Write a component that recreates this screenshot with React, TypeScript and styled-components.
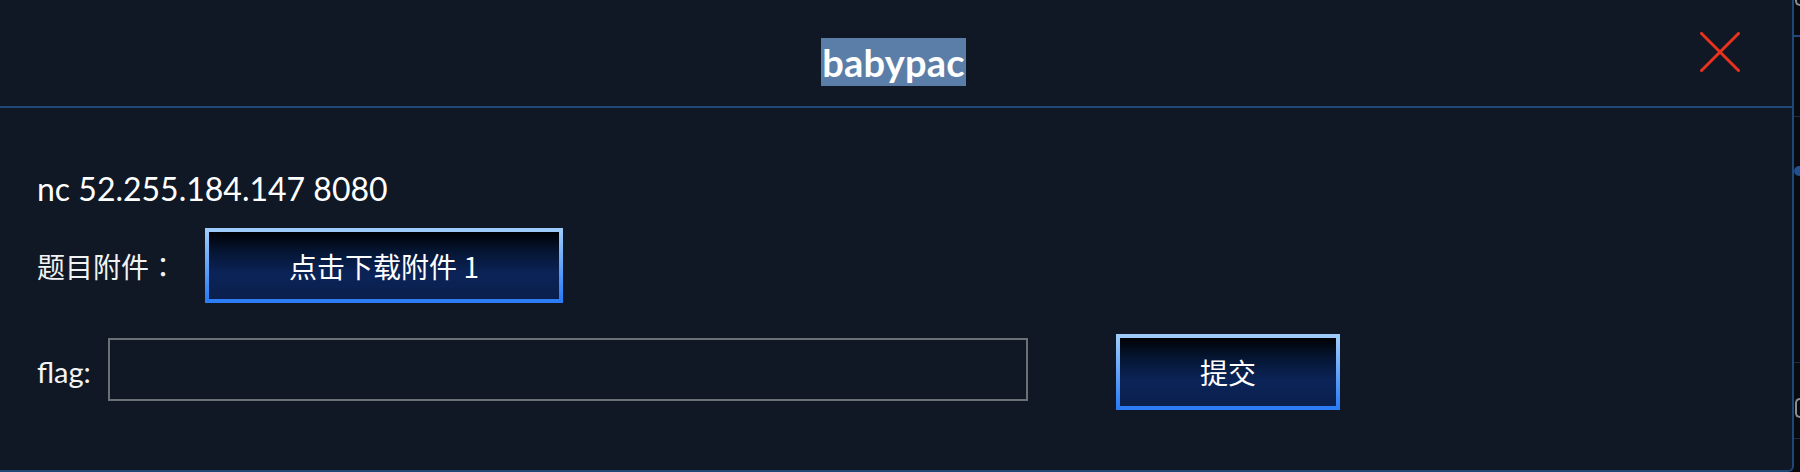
import React from "react";
import styled, { createGlobalStyle } from "styled-components";

const GlobalStyle = createGlobalStyle`
  html, body {
    margin: 0;
    padding: 0;
    background: #080b10;
  }
  body {
    width: 1800px;
    height: 472px;
    overflow: hidden;
  }
  * { box-sizing: border-box; }
`;

const Page = styled.div`
  display: flex;
  width: 1800px;
  height: 472px;
  background: #080b10;
`;

const Modal = styled.section`
  flex: 0 0 1794px;
  height: 472px;
  display: flex;
  flex-direction: column;
  background: #0f1824;
  border-right: 2px solid #1d4877;
  border-bottom: 2px solid #1d4877;
  border-bottom-right-radius: 6px;
`;

const Header = styled.header`
  height: 108px;
  flex: 0 0 108px;
  display: grid;
  grid-template-columns: 1fr auto 1fr;
  align-items: start;
  padding-top: 32px;
  border-bottom: 2px solid #1d4877;
`;

const Title = styled.h1`
  grid-column: 2;
  margin: 6px 0 0 -5px;
  padding: 0 1px;
  background: #5b7ea8;
  color: #ffffff;
  font-family: Lato, "Noto Sans", sans-serif;
  font-weight: 700;
  font-size: 38px;
  line-height: 48px;
  letter-spacing: 0.2px;
`;

const CloseButton = styled.button`
  grid-column: 3;
  justify-self: end;
  margin-right: 52px;
  width: 40px;
  height: 40px;
  padding: 0;
  border: none;
  background: transparent;
  display: block;
  cursor: pointer;
`;

const Body = styled.div`
  display: flex;
  flex-direction: column;
  padding-left: 37px;
`;

const Address = styled.p`
  margin: 61px 0 0;
  color: #ffffff;
  font-family: Lato, "Noto Sans", sans-serif;
  font-size: 32px;
  line-height: 40px;
`;

const Row = styled.div<{ $top: number }>`
  display: flex;
  align-items: center;
  margin-top: ${(p) => p.$top}px;
`;

const CjkLabel = styled.span`
  color: #f2f2f2;
  font-family: "Noto Sans CJK SC", sans-serif;
  font-weight: 400;
  font-size: 28px;
  line-height: 40px;
  margin-right: 28px;
`;

const Colon = styled.span`
  font-family: "Noto Sans CJK JP", "Noto Sans CJK SC", sans-serif;
`;

const FlagLabel = styled.label`
  width: 71px;
  flex: 0 0 71px;
  color: #f4f4f4;
  font-family: Lato, "Noto Sans", sans-serif;
  font-weight: 400;
  font-size: 29px;
  line-height: 40px;
`;

const BlueButton = styled.button<{ $w: number; $h: number; $ml?: number }>`
  width: ${(p) => p.$w}px;
  height: ${(p) => p.$h}px;
  margin-left: ${(p) => p.$ml ?? 0}px;
  padding: 0;
  border: 4px solid transparent;
  border-image: linear-gradient(to bottom, #9ccbfb, #2b7cf6) 1;
  background: linear-gradient(
    to bottom,
    #000205 0%,
    #051634 30%,
    #0b2458 62%,
    #0a1f4c 100%
  );
  color: #ffffff;
  font-family: "Noto Sans CJK SC", sans-serif;
  font-weight: 400;
  font-size: 28px;
  line-height: 1;
  cursor: pointer;
`;

const FlagInput = styled.input`
  width: 920px;
  height: 63px;
  margin-top: -5px;
  border: 2px solid #6b7077;
  background: #0f1824;
  color: #ffffff;
  font-size: 28px;
  padding: 0 12px;
  outline: none;
`;

const Strip = styled.aside`
  flex: 1 1 auto;
  display: flex;
  flex-direction: column;
  background: #070a0e;
`;

const StripBit = styled.div<{ $h: number; $mt: number; $c: string; $r?: boolean }>`
  height: ${(p) => p.$h}px;
  margin-top: ${(p) => p.$mt}px;
  background: ${(p) => p.$c};
  border-top-left-radius: ${(p) => (p.$r ? "6px" : "0")};
  border-bottom-left-radius: ${(p) => (p.$r ? "6px" : "0")};
`;

const StripArc = styled.div<{ $h: number; $mt: number }>`
  height: ${(p) => p.$h}px;
  margin-top: ${(p) => p.$mt}px;
  margin-left: 1px;
  border: 2px solid #8a8d92;
  border-right: none;
  border-radius: 10px 0 0 10px;
`;

export default function App() {
  return (
    <>
      <GlobalStyle />
      <Page>
        <Modal>
          <Header>
            <Title>babypac</Title>
            <CloseButton aria-label="close">
              <svg width="40" height="40" viewBox="0 0 40 40">
                <path
                  d="M1.5 1.5 L38.5 38.5 M38.5 1.5 L1.5 38.5"
                  stroke="#e8321e"
                  strokeWidth="3"
                  strokeLinecap="square"
                  fill="none"
                />
              </svg>
            </CloseButton>
          </Header>
          <Body>
            <Address>nc 52.255.184.147 8080</Address>
            <Row $top={19}>
              <CjkLabel>
                题目附件<Colon>：</Colon>
              </CjkLabel>
              <BlueButton $w={358} $h={75}>点击下载附件 1</BlueButton>
            </Row>
            <Row $top={31}>
              <FlagLabel htmlFor="flag">flag:</FlagLabel>
              <FlagInput id="flag" type="text" />
              <BlueButton $w={224} $h={76} $ml={88}>提交</BlueButton>
            </Row>
          </Body>
        </Modal>
        <Strip>
          <StripArc $h={10} $mt={-4} />
          <StripBit $h={2} $mt={29} $c="#1d4877" />
          <StripBit $h={1} $mt={79} $c="#1a2c44" />
          <StripBit $h={10} $mt={49} $c="#1f4f8f" $r />
          <StripBit $h={1} $mt={186} $c="#1a2c44" />
          <StripArc $h={20} $mt={35} />
          <StripBit $h={1} $mt={20} $c="#1a2c44" />
        </Strip>
      </Page>
    </>
  );
}
